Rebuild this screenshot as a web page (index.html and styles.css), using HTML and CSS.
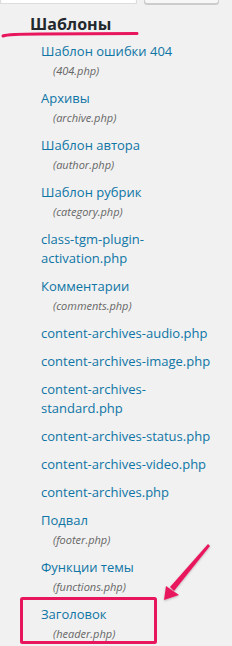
FILE: index.html
```html
<!DOCTYPE html>
<html lang="ru">
<head>
    <meta charset="UTF-8">
    <title>Шаблоны</title>
    <link rel="stylesheet" href="styles.css">
</head>
<body>

    <!-- search row, cut off at the top -->
    <div class="search-row">
        <input type="text" class="search-input">
        <button class="search-btn"></button>
    </div>

    <h3 class="files-title">Шаблоны</h3>

    <ul class="files">
        <li><a href="#">Шаблон ошибки 404</a><span class="file-name">(404.php)</span></li>
        <li><a href="#">Архивы</a><span class="file-name">(archive.php)</span></li>
        <li><a href="#">Шаблон автора</a><span class="file-name">(author.php)</span></li>
        <li><a href="#">Шаблон рубрик</a><span class="file-name">(category.php)</span></li>
        <li><a href="#">class-tgm-plugin-activation.php</a></li>
        <li><a href="#">Комментарии</a><span class="file-name">(comments.php)</span></li>
        <li><a href="#">content-archives-audio.php</a></li>
        <li><a href="#">content-archives-image.php</a></li>
        <li><a href="#">content-archives-standard.php</a></li>
        <li><a href="#">content-archives-status.php</a></li>
        <li><a href="#">content-archives-video.php</a></li>
        <li><a href="#">content-archives.php</a></li>
        <li><a href="#">Подвал</a><span class="file-name">(footer.php)</span></li>
        <li><a href="#">Функции темы</a><span class="file-name">(functions.php)</span></li>
        <li><a href="#">Заголовок</a><span class="file-name">(header.php)</span></li>
    </ul>

    <!-- annotation marks -->
    <svg class="marks" width="232" height="646" viewBox="0 0 232 646">
        <defs>
            <filter id="shade" x="-20%" y="-20%" width="140%" height="140%">
                <feDropShadow dx="0" dy="1" stdDeviation="1.2" flood-color="#000" flood-opacity="0.25"/>
            </filter>
        </defs>
        <path d="M3 36 Q8 34 40 34 L137 33.5" fill="none" stroke="#e8175d" stroke-width="3" stroke-linecap="round"/>
        <rect x="21.5" y="598.5" width="134" height="44" rx="1" fill="none" stroke="#e8175d" stroke-width="3"/>
        <g filter="url(#shade)">
            <polygon points="208,544 210,546 174,591 170,587" fill="#e8175d"/>
            <polygon points="164,600 166,586 179,595" fill="#e8175d"/>
        </g>
    </svg>

</body>
</html>
```

FILE: styles.css
```css
body {
    margin: 0;
    background: #f1f1f1;
    font-family: "Open Sans", sans-serif;
    position: relative;
    width: 232px;
    height: 646px;
    overflow: hidden;
}
.search-row {
    display: flex;
    gap: 7px;
    margin-top: -26px;
}
.search-input {
    width: 137px;
    height: 30px;
    margin: 0;
    padding: 0;
    border: 1px solid #ddd;
    background: #fff;
    box-sizing: border-box;
    box-shadow: inset 0 1px 2px rgba(0, 0, 0, 0.07);
}
.search-btn {
    width: 75px;
    height: 30px;
    margin: 0;
    border: 1px solid #ccc;
    border-radius: 3px;
    background: #f7f7f7;
    box-shadow: 0 1px 0 #ccc;
}
.files-title {
    margin: 9px 0 0 30px;
    font-size: 16px;
    font-weight: 700;
    line-height: 22px;
    color: #23282d;
}
.files {
    list-style: none;
    margin: 7px 0 0;
    padding: 0 14px 0 41px;
}
.files li {
    margin-bottom: 9px;
    font-size: 13px;
    line-height: 19px;
}
.files a {
    color: #0e75a5;
    text-decoration: none;
}
.file-name {
    display: block;
    padding-left: 12px;
    font-size: 11px;
    font-style: italic;
    color: #666;
}
.marks {
    position: absolute;
    top: 0;
    left: 0;
    pointer-events: none;
}
```
